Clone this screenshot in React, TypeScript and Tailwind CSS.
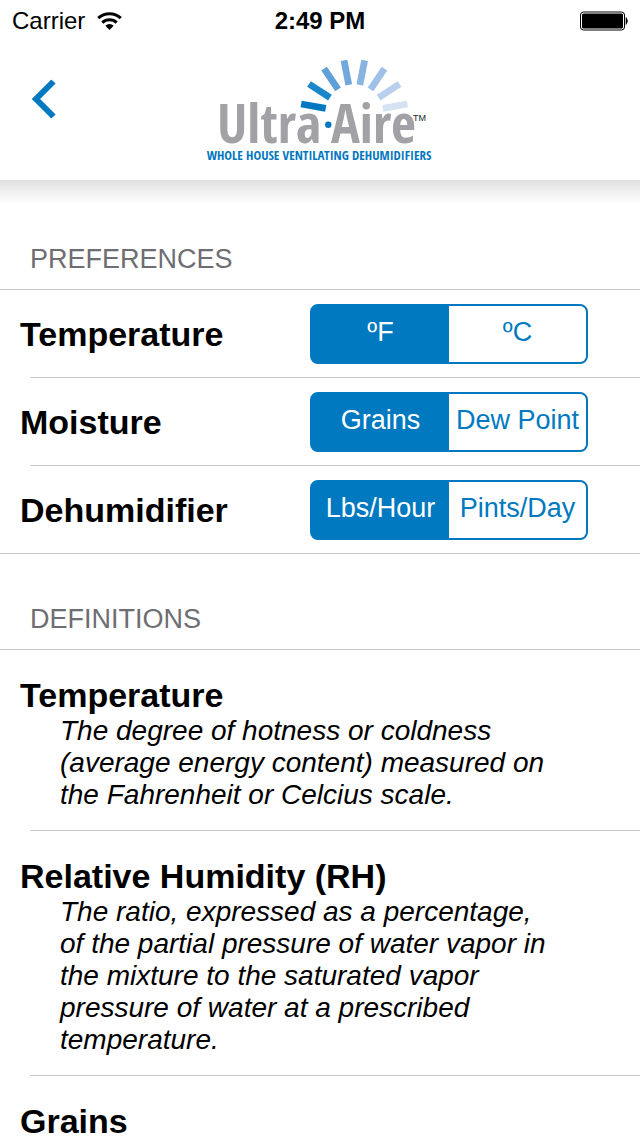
import { useState } from 'react'
import { clsx } from 'clsx'

interface Preference {
  label: string
  options: string[]
}

interface Definition {
  term: string
  text?: string
}

const preferences: Preference[] = [
  { label: 'Temperature', options: ['ºF', 'ºC'] },
  { label: 'Moisture', options: ['Grains', 'Dew Point'] },
  { label: 'Dehumidifier', options: ['Lbs/Hour', 'Pints/Day'] },
]

const definitions: Definition[] = [
  {
    term: 'Temperature',
    text: 'The degree of hotness or coldness (average energy content) measured on the Fahrenheit or Celcius scale.',
  },
  {
    term: 'Relative Humidity (RH)',
    text: 'The ratio, expressed as a percentage, of the partial pressure of water vapor in the mixture to the saturated vapor pressure of water at a prescribed temperature.',
  },
  { term: 'Grains' },
]

const rays = [
  { angle: -80, color: '#0077c0' },
  { angle: -57, color: '#1b87cb' },
  { angle: -34, color: '#60a0d8' },
  { angle: -11, color: '#72a8dc' },
  { angle: 11, color: '#88b4e2' },
  { angle: 34, color: '#9fc1e7' },
  { angle: 57, color: '#b8d0ee' },
  { angle: 80, color: '#d5e2f4' },
]

function StatusBar() {
  return (
    <div className="grid h-10 shrink-0 grid-cols-3 items-center px-3 pt-0.5 text-2xl text-black">
      <div className="flex items-center gap-3">
        <span>Carrier</span>
        <svg className="h-[18px] w-[25px]" viewBox="0 0 25 18" fill="none" stroke="black" strokeWidth="3">
          <path d="M1.2 6.2a16.4 16.4 0 0 1 22.6 0" />
          <path d="M5.3 10.6a10.4 10.4 0 0 1 14.4 0" />
          <path d="M12.5 18l-4.2-4.3a6 6 0 0 1 8.4 0z" fill="black" stroke="none" />
        </svg>
      </div>
      <span className="text-center font-bold">2:49 PM</span>
      <svg className="h-5 w-12 justify-self-end" viewBox="0 0 48 20">
        <rect x="0.5" y="1" width="44" height="18" rx="3" fill="none" stroke="black" strokeWidth="1" />
        <rect x="2" y="2.5" width="41" height="15" rx="1.5" fill="black" />
        <path d="M46 6.5q3 3.5 0 7z" fill="black" stroke="black" strokeWidth="0.6" />
      </svg>
    </div>
  )
}

function Logo() {
  return (
    <svg className="h-[120px] w-60" viewBox="0 0 240 120" role="img" aria-label="Ultra-Aire">
      <g transform="translate(154.3 63.4)">
        {rays.map((ray) => (
          <rect
            key={ray.angle}
            x="-3.4"
            y="-54"
            width="6.8"
            height="25"
            fill={ray.color}
            transform={`rotate(${ray.angle})`}
          />
        ))}
      </g>
      <g className="font-['Open_Sans_Condensed','Liberation_Sans_Narrow',sans-serif] font-bold">
        <text x="17" y="93" fontSize="54" fill="#a2a1a6">Ultra</text>
        <text x="131" y="93" fontSize="54" fill="#a2a1a6">Aire</text>
        <text x="119" y="110" fontSize="13" textAnchor="middle" fill="#0077c0">
          WHOLE HOUSE VENTILATING DEHUMIDIFIERS
        </text>
      </g>
      <circle cx="128.3" cy="74.8" r="3.2" fill="#0077c0" />
      <text x="213" y="71" fontSize="9" fill="#222" className="font-['Liberation_Sans',sans-serif]">TM</text>
    </svg>
  )
}

function SectionTitle({ children }: { children: string }) {
  return (
    <h2 className="border-b border-[#c8c7cc] px-[30px] pb-3 text-[27px] leading-9 text-[#6d6d72]">
      {children}
    </h2>
  )
}

function SegmentedControl({ label, options }: Preference) {
  const [selected, setSelected] = useState(options[0])

  return (
    <div
      role="group"
      aria-label={label}
      className="grid h-[60px] w-[278px] grid-cols-2 overflow-hidden rounded-lg border-2 border-[#0079c1] bg-[#0079c1]"
    >
      {options.map((option) => (
        <button
          key={option}
          type="button"
          aria-pressed={selected === option}
          onClick={() => setSelected(option)}
          className={clsx(
            'pb-1 text-center text-[27px] leading-8 whitespace-nowrap',
            selected === option ? 'bg-[#0079c1] text-white' : 'bg-white text-[#0079c1]',
          )}
        >
          {option}
        </button>
      ))}
    </div>
  )
}

export default function App() {
  return (
    <div className="flex h-screen flex-col bg-white font-['Liberation_Sans',Arial,sans-serif] text-black">
      <StatusBar />
      <header className="relative flex h-[140px] shrink-0 items-center justify-center">
        <button type="button" aria-label="Back" className="absolute top-8 left-6 p-1">
          <svg className="h-[44px] w-8" viewBox="0 0 32 44" fill="none" stroke="#0079c1" strokeWidth="6">
            <path d="M25.5 5.5L8 23l17.5 17.5" />
          </svg>
        </button>
        <Logo />
        <div className="pointer-events-none absolute inset-x-0 top-full h-6 bg-linear-to-b from-[#e0e0e0] to-transparent" />
      </header>

      <main className="min-h-0 flex-1 overflow-y-auto pt-[61px] [scrollbar-width:none]">
        <section>
          <SectionTitle>PREFERENCES</SectionTitle>
          <ul className="border-b border-[#c8c7cc]">
            {preferences.map((preference, i) => (
              <li key={preference.label}>
                {i > 0 && <div className="ml-[30px] border-t border-[#c8c7cc]" />}
                <div className="flex h-[87px] items-center justify-between pr-[52px] pl-5">
                  <span className="text-[34px] leading-10 font-bold">{preference.label}</span>
                  <SegmentedControl {...preference} />
                </div>
              </li>
            ))}
          </ul>
        </section>

        <section className="pt-[47px]">
          <SectionTitle>DEFINITIONS</SectionTitle>
          <dl>
            {definitions.map((definition, i) => (
              <div key={definition.term}>
                {i > 0 && <div className="ml-[30px] border-t border-[#c8c7cc]" />}
                <div className="pt-[25px] pr-20 pb-[19px] pl-5">
                  <dt className="text-[34px] leading-10 font-bold">{definition.term}</dt>
                  {definition.text && (
                    <dd className="pl-10 text-[28px] leading-8 italic">{definition.text}</dd>
                  )}
                </div>
              </div>
            ))}
          </dl>
        </section>
      </main>
    </div>
  )
}
